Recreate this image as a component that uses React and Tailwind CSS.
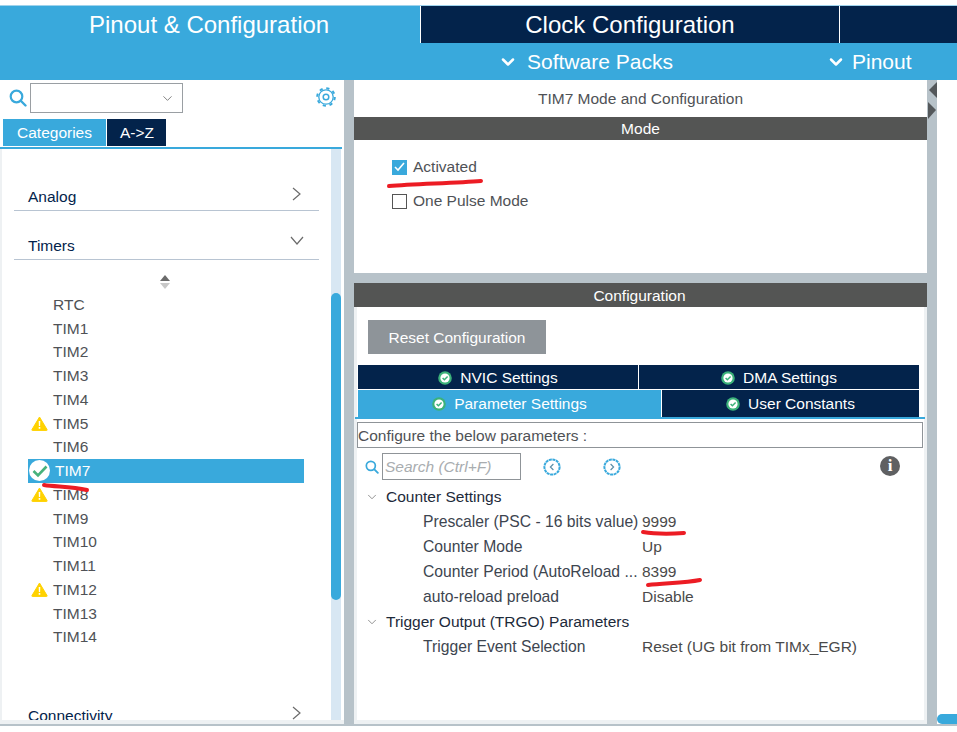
import React from 'react';
import { ChevronDown } from 'lucide-react';

const timers = [
  { name: 'RTC' },
  { name: 'TIM1' },
  { name: 'TIM2' },
  { name: 'TIM3' },
  { name: 'TIM4' },
  { name: 'TIM5', warn: true },
  { name: 'TIM6' },
  { name: 'TIM7', active: true },
  { name: 'TIM8', warn: true },
  { name: 'TIM9' },
  { name: 'TIM10' },
  { name: 'TIM11' },
  { name: 'TIM12', warn: true },
  { name: 'TIM13' },
  { name: 'TIM14' },
];

const SearchIcon = ({ size = 18 }) => (
  <svg width={size} height={size} viewBox="0 0 18 18" fill="none" stroke="#39a9dc">
    <circle cx="7.5" cy="7.5" r="5.8" strokeWidth="2.2" />
    <path d="M12 12l4.5 4.5" strokeWidth="2.4" strokeLinecap="round" />
  </svg>
);

const GearIcon = () => (
  <svg width="20" height="20" viewBox="0 0 20 20" fill="none" stroke="#39a9dc">
    <circle cx="10" cy="10" r="2.800" strokeWidth="1.500" />
    <circle cx="10" cy="10" r="7.200" strokeWidth="1.300" />
    <circle cx="10" cy="10" r="8.800" strokeWidth="2" strokeDasharray="3.2 3.710" />
  </svg>
);

const WarnIcon = () => (
  <svg width="17" height="15" viewBox="0 0 17 15">
    <path d="M8.5 1L16 13.5a.6.6 0 0 1-.5.9h-14a.6.6 0 0 1-.5-.9z" fill="#ffd200" stroke="#ffd200" strokeLinejoin="round" />
    <path d="M7.7 5h1.6l-.2 5H7.9zM7.7 11h1.6v1.7H7.7z" fill="#fff" />
  </svg>
);

const CheckBadge = ({ size = 14 }) => (
  <svg width={size} height={size} viewBox="0 0 14 14">
    <circle cx="7" cy="7" r="6.8" fill="#3cb27a" />
    <circle cx="7" cy="7" r="4.6" fill="#fff" />
    <path d="M4.6 7l1.8 1.8 3.2-3.3" fill="none" stroke="#3cb27a" strokeWidth="1.5" />
  </svg>
);

const RoundArrow = ({ dir }) => (
  <svg width="18" height="18" viewBox="0 0 18 18" fill="none">
    <circle cx="9" cy="9" r="7.6" stroke="#39a9dc" strokeWidth="2" strokeDasharray="3 .6" />
    <path d={dir === 'left' ? 'M10.4 6L7.4 9l3 3' : 'M7.6 6l3 3-3 3'} stroke="#5b8fa8" strokeWidth="1.2" />
  </svg>
);

const RedStroke = ({ className, width, height, d }) => (
  <svg className={`absolute ${className}`} width={width} height={height} viewBox={`0 0 ${width} ${height}`} fill="none">
    <path d={d} stroke="#ec1c24" strokeWidth="4" strokeLinecap="round" />
  </svg>
);

const CategoryHeader = ({ label, open, className }) => (
  <div className={`mx-[12px] flex items-start justify-between border-b border-[#b8c4d2] text-[#03234b] ${className}`}>
    <span className="pl-[14px]">{label}</span>
    {open ? (
      <svg width="14" height="10" viewBox="0 0 14 10" fill="none" className="mr-[15px] mt-[2px]">
        <path d="M1 1l6 7 6-7" stroke="#6b6b6b" strokeWidth="1.2" />
      </svg>
    ) : (
      <svg width="10" height="14" viewBox="0 0 10 14" fill="none" className="mr-[17px] mt-[2px]">
        <path d="M1 1l7 6-7 6" stroke="#6b6b6b" strokeWidth="1.2" />
      </svg>
    )}
  </div>
);

const SettingTab = ({ label, active, className }) => (
  <div className={`flex items-center justify-center gap-[8px] text-white ${active ? 'bg-[#39a9dc]' : 'bg-[#03234b]'} ${className}`}>
    <CheckBadge />
    <span>{label}</span>
  </div>
);

const ParamRow = ({ label, value }) => (
  <div className="flex h-[25px] items-center text-[#4a4a4a]">
    <span className="w-[285px] shrink-0 pl-[66px] text-[15.7px] whitespace-nowrap text-[#3d4550]">{label}</span>
    <span>{value}</span>
  </div>
);

const GroupRow = ({ label }) => (
  <div className="flex h-[25px] items-center text-[#1d2a3a]">
    <ChevronDown size={14} strokeWidth={1.2} className="ml-[8px] mr-[7px] text-[#666]" />
    <span>{label}</span>
  </div>
);

export default function App() {
  return (
    <div className="relative flex h-[732px] w-[957px] flex-col overflow-hidden bg-white font-['Liberation_Sans',Arial,sans-serif] text-[15.5px]">
      {/* top tabs */}
      <div className="h-[6px] shrink-0 border-b border-[#9fd3ec] bg-white" />
      <div className="flex h-[37px] shrink-0 text-[24px] leading-[38px] text-white">
        <div className="w-[420px] bg-[#39a9dc] pl-[89px]">Pinout &amp; Configuration</div>
        <div className="w-[420px] border-x border-white bg-[#03234b] text-center">Clock Configuration</div>
        <div className="flex-1 bg-[#03234b]" />
      </div>
      <div className="flex h-[37px] shrink-0 items-center bg-[#39a9dc] pl-[498px] text-[21px] text-white">
        <ChevronDown size={20} strokeWidth={3} />
        <span className="ml-[9px] w-[299px]">Software Packs</span>
        <ChevronDown size={20} strokeWidth={3} />
        <span className="ml-[6px]">Pinout</span>
      </div>

      <div className="flex h-[644px] shrink-0">
        {/* left panel */}
        <div className="flex h-full w-[344px] shrink-0 flex-col">
          <div className="flex h-[39px] shrink-0 items-start pt-[3px]">
            <span className="mt-[6px] ml-[9px] mr-[3px]"><SearchIcon /></span>
            <div className="flex h-[30px] w-[153px] items-center justify-end border border-[#9a9fa3] pr-[7px]">
              <ChevronDown size={15} strokeWidth={1.3} className="text-[#666]" />
            </div>
            <span className="mt-[4px] ml-[133px]"><GearIcon /></span>
          </div>
          <div className="flex h-[27px] shrink-0 pl-[3px] text-white">
            <div className="flex w-[103px] items-center justify-center bg-[#39a9dc]">Categories</div>
            <div className="ml-[1px] flex w-[59px] items-center justify-center bg-[#03234b] pl-[1px]">A-&gt;Z</div>
          </div>
          <div className="h-[3px] w-[342px] shrink-0 border-b-2 border-[#39a9dc] bg-white" />
          <div className="flex min-h-0 flex-1 border-b-4 border-l-2 border-[#eef1f3] bg-white">
            <div className="w-[329px] shrink-0 overflow-hidden">
              <CategoryHeader label="Analog" className="mt-[36px] h-[26px]" />
              <CategoryHeader label="Timers" open className="mt-[23px] h-[26px]" />
              <div className="mt-[15px] flex h-[14px] justify-center pr-[4px]">
                <svg width="12" height="14" viewBox="0 0 12 14">
                  <path d="M6 0l5 6H1z" fill="#6b6b6b" />
                  <path d="M6 14l5-6H1z" fill="#c8c8c8" />
                </svg>
              </div>
              <div className="mt-[3.5px] ml-[26px] w-[276px]">
                {timers.map((t) => (
                  <div
                    key={t.name}
                    className={`flex h-[23.75px] items-center ${t.active ? 'bg-[#39a9dc] text-white' : 'text-[#4f5256]'}`}
                  >
                    {t.active ? (
                      <span className="flex h-[22px] w-[27px] shrink-0 items-center pl-[1px]"><span className="flex h-[21px] w-[21px] items-center justify-center rounded-full bg-white"><svg width="16" height="14" viewBox="0 0 16 14"><path d="M1.5 7l4.5 4.5L14.500 2.500" fill="none" stroke="#47b27c" strokeWidth="2.600" /></svg></span></span>
                    ) : (
                      <span className="flex w-[25px] shrink-0 items-center pl-[3px]">{t.warn && <WarnIcon />}</span>
                    )}
                    <span>{t.name}</span>
                  </div>
                ))}
              </div>
              <CategoryHeader label="Connectivity" className="mt-[55px] h-[28px]" />
            </div>
            <div className="flex w-[10px] shrink-0 flex-col bg-[#d8e7f3]">
              <div className="mt-[144px] h-[307px] rounded-full bg-[#39a9dc]" />
            </div>
            <div className="flex-1" />
          </div>
        </div>

        {/* gutter */}
        <div className="w-[10px] shrink-0 bg-[#b7c2c9]" />

        {/* centre panel */}
        <div className="flex h-full w-[573px] shrink-0 flex-col">
          <div className="flex h-[37px] shrink-0 items-center justify-center text-[#4f5256]">TIM7 Mode and Configuration</div>
          <div className="flex h-[23px] shrink-0 items-center justify-center bg-[#545554] text-white">Mode</div>
          <div className="h-[133px] shrink-0 pl-[38px] pt-[19px] text-[#4f5256]">
            <div className="flex h-[16px] items-center gap-[6px]">
              <span className="flex h-[15px] w-[15px] items-center justify-center bg-[#39a9dc]">
                <svg width="11" height="10" viewBox="0 0 11 10"><path d="M1 5l3 3 6-7" fill="none" stroke="#fff" strokeWidth="1.600" /></svg>
              </span>
              <span>Activated</span>
            </div>
            <div className="mt-[18px] flex h-[16px] items-center gap-[6px]">
              <span className="h-[15px] w-[15px] border border-[#555]" />
              <span>One Pulse Mode</span>
            </div>
          </div>
          <div className="h-[10px] shrink-0 bg-[#b7c2c9]" />
          <div className="flex h-[24px] shrink-0 items-center justify-center bg-[#545554] pt-[1px] pr-[2px] text-white">Configuration</div>
          <div className="flex min-h-0 flex-1 flex-col border-b-4 border-x-[3px] border-[#eef1f3] border-t-0 bg-white">
            <div className="ml-[11px] mt-[13px] flex h-[34px] w-[178px] shrink-0 items-center justify-center bg-[#8e9499] pt-[1px] text-white">Reset Configuration</div>
            <div className="ml-[1px] mt-[11px] w-[561px] shrink-0">
              <div className="flex h-[24px] gap-[1px]">
                <SettingTab label="NVIC Settings" className="w-[280px] pt-[2px]" />
                <SettingTab label="DMA Settings" className="flex-1 pt-[2px]" />
              </div>
              <div className="mt-[1px] flex h-[27px] gap-[1px]">
                <SettingTab label="Parameter Settings" active className="w-[303px]" />
                <SettingTab label="User Constants" className="flex-1" />
              </div>
            </div>
            <div className="-ml-[2px] h-[2px] w-[570px] shrink-0 bg-[#39a9dc]" />
            <div className="mt-[3px] flex h-[26px] w-[566px] shrink-0 items-center border border-[#8f9498] pt-[1px] text-[#4f5256]">Configure the below parameters :</div>
            <div className="mt-[5px] flex h-[27px] shrink-0 items-center">
              <span className="ml-[8px] mr-[3px]"><SearchIcon size={14} /></span>
              <div className="flex h-[27px] w-[139px] items-center border border-[#8f9498] pl-[2px] pt-[1px] italic text-[#a9adb0]">Search (Ctrl+F)</div>
              <span className="ml-[22px]"><RoundArrow dir="left" /></span>
              <span className="ml-[42px]"><RoundArrow dir="right" /></span>
              <span className="ml-[259px] -mt-[1px] flex h-[20px] w-[20px] items-center justify-center rounded-full bg-[#5f6062] font-['Liberation_Serif',serif] text-[17px] font-bold text-white">i</span>
            </div>
            <div className="mt-[4px]">
              <GroupRow label="Counter Settings" />
              <ParamRow label="Prescaler (PSC - 16 bits value)" value="9999" />
              <ParamRow label="Counter Mode" value="Up" />
              <ParamRow label="Counter Period (AutoReload ..." value="8399" />
              <ParamRow label="auto-reload preload" value="Disable" />
              <GroupRow label="Trigger Output (TRGO) Parameters" />
              <ParamRow label="Trigger Event Selection" value="Reset (UG bit from TIMx_EGR)" />
            </div>
          </div>
        </div>

        {/* right gutter with collapse arrows */}
        <div className="flex w-[10px] shrink-0 flex-col bg-[#b7c2c9]">
          <svg width="10" height="40" viewBox="0 0 10 40" className="mt-[2px]">
            <path d="M2 8l8-8v16z" fill="#54585b" />
            <path d="M1 20l8 8-8 9z" fill="#54585b" />
          </svg>
        </div>

        {/* far right */}
        <div className="relative w-[20px] shrink-0 bg-white">
          <div className="absolute bottom-0 left-0 h-[10px] w-[20px] rounded-l-full bg-[#39a9dc]" />
        </div>
      </div>
      <div className="h-[2px] shrink-0 bg-[#b7c2c9]" />

      {/* hand-drawn red marks on top of the screenshot */}
      <RedStroke className="left-[386px] top-[178px]" width={100} height={12} d="M3 8C30 6 70 5 95 3" />
      <RedStroke className="left-[41px] top-[482px]" width={50} height={12} d="M3 3C15 5 30 4 46 8" />
      <RedStroke className="left-[640px] top-[528px]" width={50} height={10} d="M3 4C15 6 30 6 44 5" />
      <RedStroke className="left-[645px] top-[576px]" width={60} height={12} d="M3 9C20 7 40 7 55 4" />
    </div>
  );
}
